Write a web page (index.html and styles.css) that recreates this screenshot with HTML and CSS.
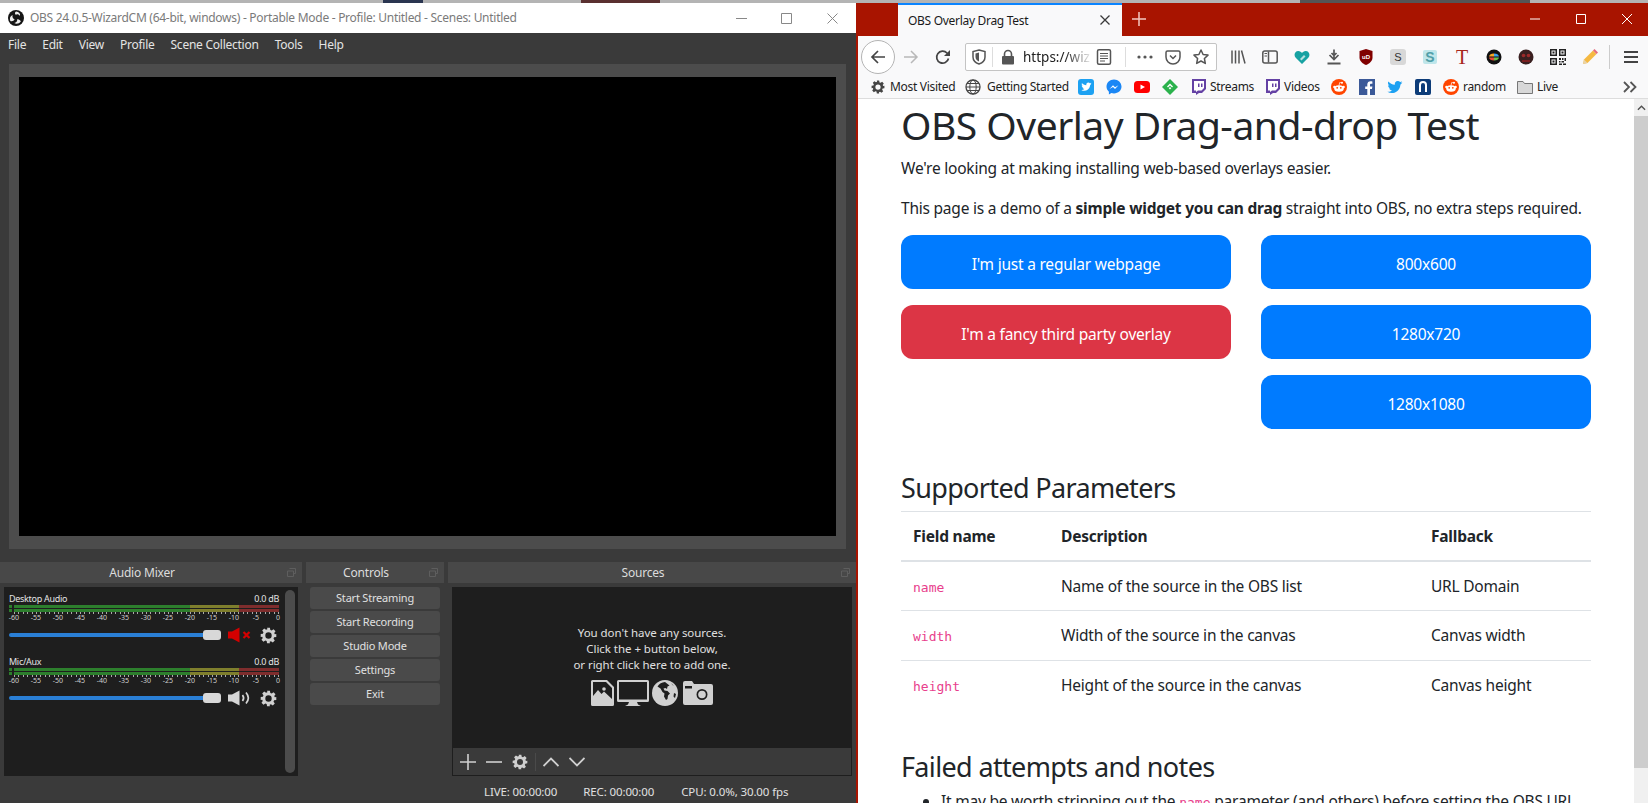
FILE: index.html
```html
<!DOCTYPE html>
<html lang="en">
<head>
<meta charset="utf-8">
<title>OBS and Firefox</title>
<link rel="stylesheet" href="styles.css">
</head>
<body>
<svg class="defs" width="0" height="0">
  <defs>
    <symbol id="gear" viewBox="0 0 24 24"><path fill-rule="evenodd" d="M10 1h4l.6 3.1 1.9.8 2.6-1.8 2.8 2.8-1.8 2.6.8 1.9L23 10v4l-3.1.6-.8 1.9 1.8 2.6-2.8 2.8-2.6-1.8-1.9.8L14 23h-4l-.6-3.1-1.9-.8-2.6 1.8-2.8-2.8 1.8-2.6-.8-1.9L1 14v-4l3.1-.6.8-1.9-1.8-2.6 2.8-2.8 2.6 1.8 1.9-.8zM12 7.5a4.500 4.500 0 1 0 0 9 4.500 4.500 0 0 0 0-9z"/></symbol>
    <symbol id="twitch" viewBox="0 0 16 16"><path fill="#6441a4" d="M2 0h14v10l-4 4H9l-3 2v-2H2z"/><path fill="#fff" d="M4 2h10v7l-2.500 2.500H8L6 13v-1.500H4z"/><path fill="#6441a4" d="M8 4.500h1.500V8H8zM11 4.500h1.500V8H11z"/></symbol>
    <symbol id="reddit" viewBox="0 0 16 16"><circle cx="8" cy="8" r="8" fill="#ff4500"/><ellipse cx="8" cy="9.500" rx="4.800" ry="3.300" fill="#fff"/><circle cx="3.400" cy="8" r="1.200" fill="#fff"/><circle cx="12.600" cy="8" r="1.200" fill="#fff"/><circle cx="11" cy="3.800" r="1" fill="#fff"/><path d="M8 6.500 8.700 3.500 11 3.800" fill="none" stroke="#fff" stroke-width=".7"/><circle cx="6.200" cy="8.800" r=".9" fill="#ff4500"/><circle cx="9.800" cy="8.800" r=".9" fill="#ff4500"/></symbol>
    <symbol id="twbird" viewBox="0 0 16 16"><path fill="#1da1f2" d="M15.500 3.400c-.6.300-1.200.400-1.800.500.6-.4 1.100-1 1.400-1.700-.6.400-1.300.6-2 .8a3.100 3.100 0 0 0-5.300 2.800C5.200 5.700 2.900 4.400 1.400 2.500c-.8 1.400-.4 3.200 1 4.100-.5 0-1-.2-1.400-.4 0 1.500 1.100 2.800 2.500 3.100-.5.100-1 .1-1.400 0 .4 1.300 1.600 2.100 2.900 2.200-1.300 1-2.900 1.500-4.600 1.300 4.600 3 11.600.8 12.900-6.100 0-.3.100-.6 0-.9.600-.5 1.200-1 1.600-1.700z"/></symbol>
  </defs>
</svg>

<div class="strip">
  <span class="seg s1"></span><span class="seg navy"></span><span class="seg s2"></span><span class="seg brown"></span><span class="seg s3"></span><span class="seg dark"></span><span class="seg s4"></span>
</div>

<div class="windows">
  <section class="obs">
    <header class="obs-title">
      <svg class="obs-logo" viewBox="0 0 16 16"><circle cx="8" cy="8" r="8" fill="#151515"/><path d="M8 1.500c3 .3 4.500 2 4 4.500-1-1.800-3-2.300-4.300-1.300C6.500 3.500 6.800 2.300 8 1.500zM2.300 11c-1-2.700 0-5 2.300-6-.6 2 .4 3.800 2 4.300-.6 1.500-2.400 2.300-4.300 1.700zM12.800 11.500c-1.800 2.300-4.300 2.800-6.500 1.600 2-.4 3.200-2 2.900-3.800 1.600-.3 3 .7 3.600 2.200z" fill="#eee"/></svg>
      <span class="obs-title-text">OBS 24.0.5-WizardCM (64-bit, windows) - Portable Mode - Profile: Untitled - Scenes: Untitled</span>
      <span class="wc wc-min"><svg viewBox="0 0 11 11"><path d="M0 5.500h11" stroke="#888" fill="none"/></svg></span>
      <span class="wc wc-max"><svg viewBox="0 0 11 11"><path d="M.5.500h10v10H.500z" stroke="#888" fill="none"/></svg></span>
      <span class="wc wc-close"><svg viewBox="0 0 11 11"><path d="M.5.500l10 10M10.500.500l-10 10" stroke="#888" fill="none"/></svg></span>
    </header>
    <nav class="obs-menu">
      <span>File</span><span>Edit</span><span>View</span><span>Profile</span><span>Scene Collection</span><span>Tools</span><span>Help</span>
    </nav>
    <div class="preview"><div class="canvas"></div></div>
    <div class="docks">
      <div class="dock dock-mixer">
        <div class="dock-title">Audio Mixer<svg class="float" viewBox="0 0 9 9"><path d="M2.500.500h6v5h-2M.5 3h6v5.500h-6z" fill="none"/></svg></div>
        <div class="mixer-list">
          <div class="channels">
            <div class="channel">
              <div class="ch-head"><span>Desktop Audio</span><span>0.0 dB</span></div>
              <div class="meter"><div class="clip"></div><div class="bars"><div class="bar"><i class="g"></i><i class="y"></i><i class="r"></i></div><div class="bar"><i class="g"></i><i class="y"></i><i class="r"></i></div></div></div>
              <div class="ticks"></div>
              <div class="scale"><span>-60</span><span>-55</span><span>-50</span><span>-45</span><span>-40</span><span>-35</span><span>-30</span><span>-25</span><span>-20</span><span>-15</span><span>-10</span><span>-5</span><span>0</span></div>
              <div class="ch-ctl">
                <div class="track"></div><div class="handle"></div>
                <svg class="spk" viewBox="0 0 24 16"><path fill="#d40000" d="M0 4.500h4L11.500.500v15L4 11.500H0z"/><path d="M15.500 5l6 6M21.500 5l-6 6" stroke="#d40000" stroke-width="2.200" fill="none"/></svg>
                <svg class="cgear"><use href="#gear"/></svg>
              </div>
            </div>
            <div class="channel">
              <div class="ch-head"><span>Mic/Aux</span><span>0.0 dB</span></div>
              <div class="meter"><div class="clip"></div><div class="bars"><div class="bar"><i class="g"></i><i class="y"></i><i class="r"></i></div><div class="bar"><i class="g"></i><i class="y"></i><i class="r"></i></div></div></div>
              <div class="ticks"></div>
              <div class="scale"><span>-60</span><span>-55</span><span>-50</span><span>-45</span><span>-40</span><span>-35</span><span>-30</span><span>-25</span><span>-20</span><span>-15</span><span>-10</span><span>-5</span><span>0</span></div>
              <div class="ch-ctl">
                <div class="track"></div><div class="handle"></div>
                <svg class="spk" viewBox="0 0 24 16"><path fill="#d6d6d6" d="M0 4.500h4L11.500.500v15L4 11.500H0z"/><path d="M14.500 5c1.500 2 1.500 4 0 6M18 2.500c3 3.500 3 7.500 0 11" stroke="#d6d6d6" stroke-width="1.700" fill="none"/></svg>
                <svg class="cgear"><use href="#gear"/></svg>
              </div>
            </div>
          </div>
          <div class="mix-scroll"></div>
        </div>
      </div>
      <div class="dock dock-controls">
        <div class="dock-title">Controls<svg class="float" viewBox="0 0 9 9"><path d="M2.500.500h6v5h-2M.5 3h6v5.500h-6z" fill="none"/></svg></div>
        <div class="ctl-list">
          <div class="ctl">Start Streaming</div>
          <div class="ctl">Start Recording</div>
          <div class="ctl">Studio Mode</div>
          <div class="ctl">Settings</div>
          <div class="ctl">Exit</div>
        </div>
      </div>
      <div class="dock dock-sources">
        <div class="dock-title">Sources<svg class="float" viewBox="0 0 9 9"><path d="M2.500.500h6v5h-2M.5 3h6v5.500h-6z" fill="none"/></svg></div>
        <div class="src-box">
          <div class="src-empty">
            <p>You don't have any sources.</p>
            <p>Click the + button below,</p>
            <p>or right click here to add one.</p>
            <div class="src-icons">
              <svg class="i-img" viewBox="0 0 23 26"><path fill="#d0d0d0" fill-rule="evenodd" d="M1.500 0H16l7 7v17.500a1.500 1.500 0 0 1-1.500 1.500h-20A1.500 1.500 0 0 1 0 24.500v-23A1.500 1.500 0 0 1 1.500 0zM2 2v14l5-6 3.500 4 2.500-2.500 8 7.500V8l-6-6z"/><circle cx="13" cy="9" r="1.800" fill="#d0d0d0"/></svg>
              <svg class="i-mon" viewBox="0 0 32 26"><path fill="#d0d0d0" fill-rule="evenodd" d="M1.500 0h29A1.500 1.500 0 0 1 32 1.500v19a1.500 1.500 0 0 1-1.500 1.500H20l1 2.500 3 1.500H8l3-1.500 1-2.500H1.500A1.500 1.500 0 0 1 0 20.500v-19A1.500 1.500 0 0 1 1.500 0zM2 2v17.500h28V2z"/></svg>
              <svg class="i-globe" viewBox="0 0 26 26"><circle cx="13" cy="13" r="13" fill="#d0d0d0"/><path fill="#1e1e1e" d="M13 2c-3 .3-6 1.800-7.500 4.500l3 2 2 3.500 2 1.500-.5 3 2 3.500 1.500-1 .5-3.500 2-2-2.500-2.500-3-.5-1-2 2-.5 1.500 1 .5-2.500 2-1zM19 3l1.500 2L22 6zM22 13l2 1-1 4-1.500-1.500z"/></svg>
              <svg class="i-cam" viewBox="0 0 30 24"><path fill="#d0d0d0" fill-rule="evenodd" d="M2 0h7l2 3h17a2 2 0 0 1 2 2v17a2 2 0 0 1-2 2H2a2 2 0 0 1-2-2V2a2 2 0 0 1 2-2zM19 8a5.500 5.500 0 1 0 0 11 5.500 5.500 0 0 0 0-11zM2 5v2.500h7V5z"/><circle cx="19" cy="13.500" r="3.800" fill="#d0d0d0"/></svg>
            </div>
          </div>
          <div class="src-tools">
            <svg class="t-ic" viewBox="0 0 16 16"><path d="M8 0v16M0 8h16" stroke="#d0d0d0" stroke-width="1.600" fill="none"/></svg>
            <svg class="t-ic" viewBox="0 0 16 16"><path d="M0 8h16" stroke="#d0d0d0" stroke-width="1.600" fill="none"/></svg>
            <svg class="t-ic t-gear"><use href="#gear"/></svg>
            <span class="t-sep"></span>
            <svg class="t-ic" viewBox="0 0 16 16"><path d="M.5 12 8 4.500 15.500 12" stroke="#d0d0d0" stroke-width="1.800" fill="none"/></svg>
            <svg class="t-ic" viewBox="0 0 16 16"><path d="M.5 4 8 11.500 15.500 4" stroke="#d0d0d0" stroke-width="1.800" fill="none"/></svg>
          </div>
        </div>
      </div>
    </div>
    <footer class="obs-status">
      <span class="st-live">LIVE: 00:00:00</span>
      <span class="st-rec">REC: 00:00:00</span>
      <span class="st-cpu">CPU: 0.0%, 30.00 fps</span>
    </footer>
  </section>

  <section class="ff">
    <div class="ff-title">
      <div class="tab">
        <span class="tab-label">OBS Overlay Drag Test</span>
        <svg class="tab-x" viewBox="0 0 10 10"><path d="M.5.500l9 9M9.500.500l-9 9" stroke="#3a3a3a" stroke-width="1.300" fill="none"/></svg>
      </div>
      <svg class="tab-new" viewBox="0 0 14 14"><path d="M7 0v14M0 7h14" stroke="#f3c7c0" stroke-width="1.500" fill="none"/></svg>
      <span class="ffwc ffwc-min"><svg viewBox="0 0 10 10"><path d="M0 5h10" stroke="#fff" fill="none"/></svg></span>
      <span class="ffwc ffwc-max"><svg viewBox="0 0 10 10"><path d="M.5.500h9v9h-9z" stroke="#fff" fill="none"/></svg></span>
      <span class="ffwc ffwc-close"><svg viewBox="0 0 10 10"><path d="M0 0l10 10M10 0L0 10" stroke="#fff" fill="none"/></svg></span>
    </div>

    <div class="ff-nav">
      <span class="back"><svg viewBox="0 0 16 16"><path d="M15 8H2M8 2 2 8l6 6" stroke="#444" stroke-width="1.700" fill="none"/></svg></span>
      <span class="nb"><svg viewBox="0 0 16 16"><path d="M1 8h13M8 2l6 6-6 6" stroke="#b8b8b8" stroke-width="1.500" fill="none"/></svg></span>
      <span class="nb"><svg viewBox="0 0 16 16"><path d="M13.500 9.500A6 6 0 1 1 12 4l2.500 2.500" stroke="#444" stroke-width="1.700" fill="none"/><path d="M15 1v6H9z" fill="#444"/></svg></span>
      <div class="urlbar">
        <span class="u-shield"><svg viewBox="0 0 16 16"><path d="M8 1l6 1.500V8c0 3.500-2.500 5.800-6 7-3.500-1.200-6-3.500-6-7V2.500z" stroke="#555" stroke-width="1.500" fill="none"/><path d="M8 3.500v9c-2-.8-3.500-2.500-3.500-4.500V4.500z" fill="#555"/></svg></span>
        <span class="u-sep"></span>
        <span class="u-lock"><svg viewBox="0 0 16 16"><path d="M4.500 7V5a3.500 3.500 0 0 1 7 0v2" stroke="#555" stroke-width="1.600" fill="none"/><rect x="2" y="7" width="12" height="8.500" rx="1" fill="#555"/></svg></span>
        <span class="u-text">https://wiz</span>
        <span class="u-reader"><svg viewBox="0 0 16 16"><rect x="1.500" y=".8" width="13" height="14.400" rx="1.500" stroke="#555" stroke-width="1.500" fill="none"/><path d="M4 4.500h8M4 7h8M4 9.500h8M4 12h5" stroke="#555"/></svg></span>
        <span class="u-sep u-sep2"></span>
        <span class="u-dots"><svg viewBox="0 0 16 4"><circle cx="2" cy="2" r="1.600" fill="#555"/><circle cx="8" cy="2" r="1.600" fill="#555"/><circle cx="14" cy="2" r="1.600" fill="#555"/></svg></span>
        <span class="u-pocket"><svg viewBox="0 0 16 16"><path d="M1 3.500A1.500 1.500 0 0 1 2.500 2h11A1.500 1.500 0 0 1 15 3.500V8a7 7 0 0 1-14 0z" stroke="#555" stroke-width="1.500" fill="none"/><path d="M5 6.500l3 3 3-3" stroke="#555" stroke-width="1.500" fill="none"/></svg></span>
        <span class="u-star"><svg viewBox="0 0 16 16"><path d="M8 1l2.100 4.500 4.900.600-3.600 3.400.9 4.900L8 12l-4.300 2.400.9-4.900L1 6.100l4.900-.600z" stroke="#555" stroke-width="1.500" fill="none" stroke-linejoin="round"/></svg></span>
      </div>
      <span class="nb nb-lib"><svg viewBox="0 0 16 16"><path d="M2 1.500v13M5.500 1.500v13M9 1.500v13M11.500 1.500l3.500 13" stroke="#555" stroke-width="1.500" fill="none"/></svg></span>
      <span class="nb"><svg viewBox="0 0 16 16"><rect x=".8" y="2" width="14.400" height="12" rx="2" stroke="#555" stroke-width="1.500" fill="none"/><path d="M6.500 2.500v11" stroke="#555" stroke-width="1.500"/><path d="M2.500 4.500h2.500M2.500 7h2.500" stroke="#555"/></svg></span>
      <span class="nb"><svg viewBox="0 0 16 16"><path d="M8 15 1.500 8.500C-.5 6 .8 2 4.300 2 6 2 7.300 3 8 4c.7-1 2-2 3.700-2 3.500 0 4.800 4 2.800 6.500z" fill="#17a2a2"/><path d="M6 10l4-4 1.500 1.500-4 4z" fill="#b6e0e0"/></svg></span>
      <span class="nb"><svg viewBox="0 0 16 16"><path d="M8 .5V10M3.500 6 8 10.500 12.500 6M5.500 4 8 6.500 10.500 4" stroke="#555" stroke-width="1.700" fill="none"/><path d="M1.500 14.500h13" stroke="#555" stroke-width="2" fill="none"/></svg></span>
      <span class="nb"><svg viewBox="0 0 16 16"><path d="M8 0l6.500 2v6.500c0 3.500-3 6-6.500 7.500-3.500-1.500-6.500-4-6.500-7.500V2z" fill="#800000"/><text x="8" y="10" class="ub">uD</text></svg></span>
      <span class="nb"><svg viewBox="0 0 16 16"><rect width="16" height="16" rx="3" fill="#d8d8d8"/><text x="8" y="12" class="sg">S</text></svg></span>
      <span class="nb"><svg viewBox="0 0 16 16"><rect x="1" y="1" width="14" height="14" rx="2" fill="#bfe6ea"/><text x="8" y="13" class="st">S</text></svg></span>
      <span class="nb"><svg viewBox="0 0 16 16"><text x="8" y="15" class="tt">T</text></svg></span>
      <span class="nb"><svg viewBox="0 0 16 16"><circle cx="8" cy="8" r="7.500" fill="#111"/><path d="M3 7.500a5 3.500 0 0 1 5-3v3z" fill="#f5a623"/><path d="M8 4.500a5 3.500 0 0 1 5 3H8z" fill="#3ba0e8"/><path d="M3 8.500h5v3a5 3.500 0 0 1-5-3z" fill="#e34a3a"/><path d="M8 8.500h5a5 3.500 0 0 1-5 3z" fill="#6cc04a"/></svg></span>
      <span class="nb"><svg viewBox="0 0 16 16"><circle cx="8" cy="8" r="7.500" fill="#3a2020"/><circle cx="5.500" cy="6.500" r="1.800" fill="#9c2a2a"/><circle cx="10.500" cy="6.500" r="1.800" fill="#9c2a2a"/><path d="M4 11h8v2H4z" fill="#7a1f1f"/></svg></span>
      <span class="nb"><svg viewBox="0 0 16 16"><path fill="#222" fill-rule="evenodd" d="M0 0h7v7H0zM1.500 1.500v4h4v-4zM9 0h7v7H9zM10.500 1.500v4h4v-4zM0 9h7v7H0zM1.500 10.500v4h4v-4zM2.500 2.500h2v2h-2zM11.500 2.500h2v2h-2zM2.500 11.500h2v2h-2zM9 9h2v2H9zM12 9h1.500v2H12zM14.500 9H16v3h-1.500zM9 12h1.500v1.500H9zM11.500 12H14v1.500h-2.500zM9 14.500h3V16H9zM13 14.500h3V16h-3z"/></svg></span>
      <span class="nb"><svg viewBox="0 0 16 16"><path d="M1 15l1-4.500L11 1.500l3.500 3.500-9 9z" fill="#f5b942"/><path d="M11 1.500 12.500 0 16 3.500 14.500 5z" fill="#e56a7c"/><path d="M1 15l1-4.500 3.500 3.500z" fill="#e9d3a8"/></svg></span>
      <span class="nav-sep"></span>
      <span class="nb nb-menu"><svg viewBox="0 0 14 12"><path d="M0 1h14M0 6h14M0 11h14" stroke="#444" stroke-width="2" fill="none"/></svg></span>
    </div>

    <div class="ff-marks">
      <span class="bm w-mv"><span class="bmi"><svg class="ic14"><use href="#gear"/></svg></span><span class="bmt">Most Visited</span></span>
      <span class="bm w-gs"><span class="bmi"><svg class="ic16" viewBox="0 0 16 16"><circle cx="8" cy="8" r="7" stroke="#444" stroke-width="1.300" fill="none"/><ellipse cx="8" cy="8" rx="3.200" ry="7" stroke="#444" fill="none"/><path d="M1 8h14M2 4.500h12M2 11.500h12" stroke="#444" fill="none"/></svg></span><span>Getting Started</span></span>
      <span class="bm"><span class="bmi"><svg class="ic16" viewBox="0 0 16 16"><rect width="16" height="16" rx="3" fill="#1da1f2"/><path fill="#fff" d="M13.500 4.600c-.4.200-.8.300-1.200.4.400-.3.700-.7.900-1.200-.4.300-.9.400-1.300.5a2.100 2.100 0 0 0-3.600 1.900C6.600 6.100 5 5.200 4 3.900c-.5.900-.3 2.100.7 2.800-.3 0-.7-.1-1-.3 0 1 .7 1.900 1.700 2.100-.3.100-.7.100-1 0 .3.900 1.100 1.400 2 1.500-.9.700-2 1-3.100.9 3.100 2 7.900.5 8.800-4.200v-.6c.5-.3.800-.7 1.400-1.500z"/></svg></span></span>
      <span class="bm"><span class="bmi"><svg class="ic16" viewBox="0 0 16 16"><path d="M8 .5C3.800.5.500 3.600.500 7.600c0 2.100.9 3.900 2.400 5.100V15.500l2.500-1.400c.8.200 1.700.4 2.600.4 4.200 0 7.500-3 7.500-6.900S12.200.5 8 .5z" fill="#1b87f5"/><path d="M3.500 10 7 6.300l2 2 3.500-2L9 10 7 8z" fill="#fff"/></svg></span></span>
      <span class="bm"><span class="bmi"><svg class="ic16" viewBox="0 0 16 16"><rect y="2" width="16" height="12" rx="3.500" fill="#f00"/><path d="M6.500 5.500v5L11 8z" fill="#fff"/></svg></span></span>
      <span class="bm"><span class="bmi"><svg class="ic16" viewBox="0 0 16 16"><path d="M8 0l8 8-8 8-8-8z" fill="#2bb24c"/><path d="M8 4.500 11 7.500 10 8.500 8 6.500 6 8.500 5 7.500zM8 8l1.300 1.300-1.300 1.300-1.300-1.300z" fill="#fff"/></svg></span></span>
      <span class="bm w-st"><span class="bmi"><svg class="ic16"><use href="#twitch"/></svg></span><span class="bmt">Streams</span></span>
      <span class="bm w-vi"><span class="bmi"><svg class="ic16"><use href="#twitch"/></svg></span><span class="bmt">Videos</span></span>
      <span class="bm"><span class="bmi"><svg class="ic16"><use href="#reddit"/></svg></span></span>
      <span class="bm"><span class="bmi"><svg class="ic16" viewBox="0 0 16 16"><rect width="16" height="16" fill="#3b5998"/><path d="M11 16V10h2l.4-2.500H11V6c0-.8.3-1.200 1.200-1.200h1.200V2.500C13 2.400 12.300 2.300 11.600 2.300 9.600 2.300 8.300 3.500 8.300 5.600v1.900H6.200V10h2.100v6z" fill="#fff"/></svg></span></span>
      <span class="bm"><span class="bmi"><svg class="ic16"><use href="#twbird"/></svg></span></span>
      <span class="bm"><span class="bmi"><svg class="ic16" viewBox="0 0 16 16"><rect width="16" height="16" rx="2" fill="#0d3c78"/><path d="M4 13V6a4 4 0 0 1 8 0v7h-2V6a2 2 0 0 0-4 0v7z" fill="#fff"/></svg></span></span>
      <span class="bm w-ra"><span class="bmi"><svg class="ic16"><use href="#reddit"/></svg></span><span class="bmt">random</span></span>
      <span class="bm w-li"><span class="bmi"><svg class="ic16" viewBox="0 0 16 16"><path d="M.5 2.500h5.500L7.500 4.500h8v10H.5z" fill="#d8d8d8" stroke="#777"/></svg></span><span class="bmt">Live</span></span>
      <span class="bmi bm-more"><svg viewBox="0 0 14 12"><path d="M1 1l5 5-5 5M7.500 1l5 5-5 5" stroke="#555" stroke-width="1.800" fill="none"/></svg></span>
    </div>

    <div class="ff-body">
      <main class="page">
        <h1>OBS Overlay Drag-and-drop Test</h1>
        <p class="lead-a">We're looking at making installing web-based overlays easier.</p>
        <p class="lead-b">This page is a demo of a <strong>simple widget you can drag</strong> straight into OBS, no extra steps required.</p>
        <div class="btn-cols">
          <div class="btn-col">
            <a class="btn">I'm just a regular webpage</a>
            <a class="btn btn-red">I'm a fancy third party overlay</a>
          </div>
          <div class="btn-col">
            <a class="btn">800x600</a>
            <a class="btn">1280x720</a>
            <a class="btn">1280x1080</a>
          </div>
        </div>
        <h2 class="h-params">Supported Parameters</h2>
        <table class="params">
          <thead><tr><th class="c1">Field name</th><th class="c2">Description</th><th>Fallback</th></tr></thead>
          <tbody>
            <tr><td><code>name</code></td><td>Name of the source in the OBS list</td><td>URL Domain</td></tr>
            <tr><td><code>width</code></td><td>Width of the source in the canvas</td><td>Canvas width</td></tr>
            <tr><td><code>height</code></td><td>Height of the source in the canvas</td><td>Canvas height</td></tr>
          </tbody>
        </table>
        <h2 class="h-notes">Failed attempts and notes</h2>
        <ul class="notes"><li>It may be worth stripping out the <code>name</code> parameter (and others) before setting the OBS URL</li></ul>
      </main>
      <div class="vscroll">
        <div class="vs-btn"><svg viewBox="0 0 10 6"><path d="M1 5l4-4 4 4" stroke="#505050" stroke-width="1.500" fill="none"/></svg></div>
        <div class="vs-thumb"></div>
      </div>
    </div>
  </section>
</div>
</body>
</html>
```

FILE: styles.css
```css
* { box-sizing: border-box; }
html, body { margin: 0; padding: 0; height: 803px; overflow: hidden; }
body { display: flex; flex-direction: column; font-family: "Noto Sans", "Open Sans", sans-serif; background: #3a3a3a; }
.defs { position: absolute; }
svg { display: block; }

.strip { height: 3px; display: flex; flex: none; background: #b4b4b4; }
.seg { display: block; flex: none; height: 3px; }
.s1 { width: 383px; }
.navy { width: 40px; background: #2a3550; }
.s2 { width: 158px; }
.brown { width: 79px; background: #5a3030; }
.s3 { width: 640px; }
.dark { width: 230px; background: #555; }
.s4 { width: 118px; }

.windows { flex: 1; display: flex; min-height: 0; }

/* OBS */
.obs { width: 856px; flex: none; display: flex; flex-direction: column; background: #3a3a3a; color: #dedede; }
.obs-title { height: 30px; flex: none; background: #fff; display: flex; align-items: center; position: relative; padding-left: 8px; }
.obs-logo { width: 16px; height: 16px; flex: none; }
.obs-title-text { margin-left: 6px; font-size: 12px; letter-spacing: -.28px; color: #7a7a7a; white-space: nowrap; position: relative; top: -1px; }
.wc { position: absolute; top: 10px; width: 11px; height: 11px; }
.wc-min { left: 736px; }
.wc-max { left: 781px; }
.wc-close { left: 827px; }
.obs-menu { height: 31px; flex: none; display: flex; align-items: center; padding: 0 0 9px 8px; font-size: 12px; letter-spacing: -.25px; gap: 16px; color: #e4e4e4; }
.preview { height: 485px; flex: none; margin: 0 10px 0 9px; background: #4c4c4c; padding: 13px 10px; }
.canvas { height: 459px; background: #000; }

.docks { display: flex; gap: 4px; margin-top: 13px; flex: none; height: 214px; }
.dock { display: flex; flex-direction: column; flex: none; }
.dock-mixer { width: 302px; }
.dock-controls { width: 138px; }
.dock-sources { flex: 1; }
.dock-title { height: 21px; flex: none; background: #484848; font-size: 12px; letter-spacing: -.2px; display: flex; align-items: center; justify-content: center; position: relative; color: #dcdcdc; padding-right: 18px; }
.float { position: absolute; right: 6px; top: 6px; width: 9px; height: 9px; stroke: #5e5e5e; }

.mixer-list { margin: 4px 4px 0; height: 189px; background: #1e1e1e; display: flex; }
.channels { width: 280px; padding: 4px 5px 0; flex: none; }
.channel { height: 63px; }
.ch-head { height: 14px; display: flex; justify-content: space-between; align-items: center; font-size: 9px; letter-spacing: -.3px; color: #e4e4e4; }
.meter { display: flex; gap: 2px; height: 7px; margin-top: 0; }
.clip { width: 3px; flex: none; background: linear-gradient(#2c7d2c 3px, #1e1e1e 3px, #1e1e1e 4px, #2c7d2c 4px); }
.bars { flex: 1; display: flex; flex-direction: column; gap: 1px; }
.bar { height: 3px; display: flex; }
.bar i { display: block; }
.g { width: 176px; background: #2d7f2d; }
.y { width: 49px; background: #7f7f2d; }
.r { width: 40px; background: #7f2d2d; }
.ticks { height: 2px; margin-left: 5px; width: 265px; background: repeating-linear-gradient(90deg, #aaa 0, #aaa 1px, transparent 1px, transparent 4.4px); }
.scale { display: flex; margin-left: -6px; height: 8px; font-size: 7px; line-height: 8px; color: #cfcfcf; }
.scale span { width: 22px; flex: none; text-align: center; }
.ch-ctl { height: 16px; margin-top: 5px; display: flex; align-items: center; }
.track { width: 194px; height: 4px; background: #2a7fd6; border-radius: 2px 0 0 2px; flex: none; }
.handle { width: 18px; height: 10px; background: #d8d8d8; border-radius: 3px; flex: none; }
.spk { width: 24px; height: 16px; margin-left: 7px; flex: none; }
.cgear { width: 17px; height: 17px; margin-left: 8px; flex: none; fill: #d0d0d0; }
.mix-scroll { width: 10px; margin: 3px 0 3px 1px; background: #4c4c4c; border-radius: 5px; }

.ctl-list { padding: 4px 4px 0; display: flex; flex-direction: column; gap: 2px; }
.ctl { height: 22px; background: #4a4a4a; border-radius: 3px; font-size: 11px; letter-spacing: -.2px; display: flex; align-items: center; justify-content: center; color: #e0e0e0; padding-bottom: 2px; }

.src-box { margin: 4px 4px 0; height: 189px; background: #1e1e1e; border: 1px solid #1e1e1e; display: flex; flex-direction: column; }
.src-empty { flex: 1; text-align: center; padding-top: 37px; font-size: 11.5px; letter-spacing: -.05px; line-height: 16px; color: #e0e0e0; }
.src-empty p { margin: 0; }
.src-icons { display: flex; justify-content: center; align-items: center; margin-top: 7px; gap: 3px; }
.i-img { width: 23px; height: 26px; }
.i-mon { width: 32px; height: 26px; }
.i-globe { width: 26px; height: 26px; }
.i-cam { width: 30px; height: 24px; margin-left: 2px; }
.src-tools { height: 27px; flex: none; background: #3a3a3a; display: flex; align-items: center; padding-left: 7px; gap: 10px; }
.t-ic { width: 16px; height: 16px; flex: none; }
.t-gear { fill: #d0d0d0; }
.t-sep { width: 1px; height: 18px; background: #4a4a4a; margin: 0 -3px; }

.obs-status { flex: 1; display: flex; align-items: flex-end; font-size: 11.5px; letter-spacing: -.12px; color: #e0e0e0; line-height: 16px; padding-bottom: 3px; }
.st-live { margin-left: 484px; }
.st-rec { margin-left: 26px; }
.st-cpu { margin-left: 27px; }

/* Firefox */
.ff { flex: 1; min-width: 0; display: flex; flex-direction: column; border-left: 2px solid #a81400; background: #fff; }
.ff-title { height: 33px; flex: none; background: #a81400; display: flex; align-items: flex-end; position: relative; padding-left: 40px; }
.tab { width: 224px; height: 33px; background: #f9f9fa; border-top: 2px solid #0a84ff; display: flex; align-items: center; padding-left: 10px; font-size: 12px; letter-spacing: -.3px; color: #1a1a1a; position: relative; }
.tab-x { position: absolute; left: 202px; top: 10px; width: 10px; height: 10px; }
.tab-new { width: 14px; height: 14px; margin: 0 0 10px 10px; flex: none; }
.ffwc { position: absolute; top: 11px; width: 10px; height: 10px; }
.ffwc-min { left: 672px; }
.ffwc-max { left: 718px; }
.ffwc-close { left: 764px; }

.ff-nav { height: 41px; flex: none; background: #f9f9fa; display: flex; align-items: center; padding-left: 3px; }
.back { width: 34px; height: 34px; border-radius: 50%; border: 1px solid #b4b4b4; background: #fff; display: flex; align-items: center; justify-content: center; flex: none; }
.back svg { width: 16px; height: 16px; }
.nb { width: 32px; height: 32px; display: flex; align-items: center; justify-content: center; flex: none; }
.nb svg { width: 16px; height: 16px; }
.nb-lib { margin-left: 5px; }
.nav-sep { width: 1px; height: 24px; background: #ccc; margin-left: 3px; flex: none; }
.nb-menu { margin-left: 5px; }
.nb-menu svg { width: 14px; height: 12px; }
.urlbar { width: 252px; height: 28px; margin-left: 6px; flex: none; background: #fff; border: 1px solid #c4c4c4; border-radius: 2px; display: flex; align-items: center; }
.urlbar span { display: flex; align-items: center; justify-content: center; flex: none; }
.urlbar svg { width: 16px; height: 16px; }
.u-shield { width: 26px; }
.urlbar .u-sep { width: 1px; height: 20px; background: #ddd; }
.u-lock { width: 30px; }
.urlbar .u-text { width: 70px; overflow: hidden; white-space: nowrap; justify-content: flex-start; font-size: 13.5px; color: #222; -webkit-mask-image: linear-gradient(90deg, #000 60%, transparent); mask-image: linear-gradient(90deg, #000 60%, transparent); }
.u-reader { width: 22px; }
.urlbar .u-sep2 { margin-left: 10px; }
.u-dots { width: 30px; margin-left: 4px; }
.urlbar .u-dots svg { width: 16px; height: 4px; }
.u-pocket { width: 26px; }
.u-star { width: 30px; }
.ub { font-family: "Liberation Sans", sans-serif; font-size: 6px; font-weight: 700; fill: #fff; text-anchor: middle; }
.sg { font-family: "Liberation Sans", sans-serif; font-size: 11px; fill: #333; text-anchor: middle; }
.st { font-family: "Liberation Sans", sans-serif; font-size: 14px; font-weight: 700; fill: #4f9ea8; text-anchor: middle; }
.tt { font-family: "Liberation Serif", serif; font-size: 20px; fill: #a8261a; text-anchor: middle; }

.ff-marks { height: 22px; flex: none; background: #f9f9fa; border-bottom: 1px solid #ddd; display: flex; align-items: center; padding-left: 6px; font-size: 12px; letter-spacing: -.3px; color: #222; padding-bottom: 2px; }
.bm { display: flex; align-items: center; width: 28px; flex: none; white-space: nowrap; }
.bmi { width: 28px; flex: none; display: flex; align-items: center; justify-content: center; }
.bmt { margin-left: -2px; }
.ic14 { width: 14px; height: 14px; fill: #444; }
.ic16 { width: 16px; height: 16px; }
.w-mv { width: 95px; }
.w-gs { width: 113px; }
.w-st { width: 74px; }
.w-vi { width: 67px; }
.w-ra { width: 74px; }
.w-li { width: 60px; }
.bm-more { margin-left: auto; margin-right: 4px; }
.bm-more svg { width: 14px; height: 12px; }

.ff-body { flex: 1; display: flex; min-height: 0; }
.page { flex: 1; min-width: 0; padding: 2px 43px 0; overflow: hidden; color: #212529; font-size: 15.5px; letter-spacing: -.22px; line-height: 24px; font-family: "Noto Sans", "Open Sans", sans-serif; }
h1 { margin: 0 0 7px; font-size: 39px; letter-spacing: -.5px; line-height: 48px; font-weight: 400; }
.lead-a, .lead-b { margin: 0 0 16px; }
.lead-b { margin-bottom: 15px; }
.btn-cols { display: flex; gap: 30px; }
.btn-col { flex: 1; display: flex; flex-direction: column; gap: 16px; }
.btn { height: 54px; border-radius: 12px; background: #007bff; color: #fff; display: flex; align-items: center; justify-content: center; padding-top: 3px; }
.btn-red { background: #dc3545; }
h2 { font-size: 27px; letter-spacing: -.65px; line-height: 34px; font-weight: 400; margin: 0; }
.h-params { margin-top: 42px; margin-bottom: 6px; }
.params { width: 100%; border-collapse: collapse; table-layout: fixed; }
.params th { text-align: left; font-weight: 700; padding: 12px; border-top: 1px solid #dee2e6; border-bottom: 2px solid #dee2e6; }
.params td { padding: 12px; height: 49.500px; border-bottom: 1px solid #dee2e6; }
.params tr:last-child td { border-bottom: 0; }
.c1 { width: 148px; }
.c2 { width: 370px; }
code { font-family: "DejaVu Sans Mono", monospace; font-size: 13px; line-height: 1; letter-spacing: 0; color: #e83e8c; }
.h-notes { margin-top: 40px; }
.notes { margin: 5px 0 0; padding-left: 40px; }

.vscroll { width: 14px; flex: none; background: #f0f0f0; display: flex; flex-direction: column; }
.vs-btn { height: 17px; display: flex; align-items: center; justify-content: center; }
.vs-btn svg { width: 9px; height: 6px; }
.vs-thumb { height: 652px; background: #cdcdcd; }
```
